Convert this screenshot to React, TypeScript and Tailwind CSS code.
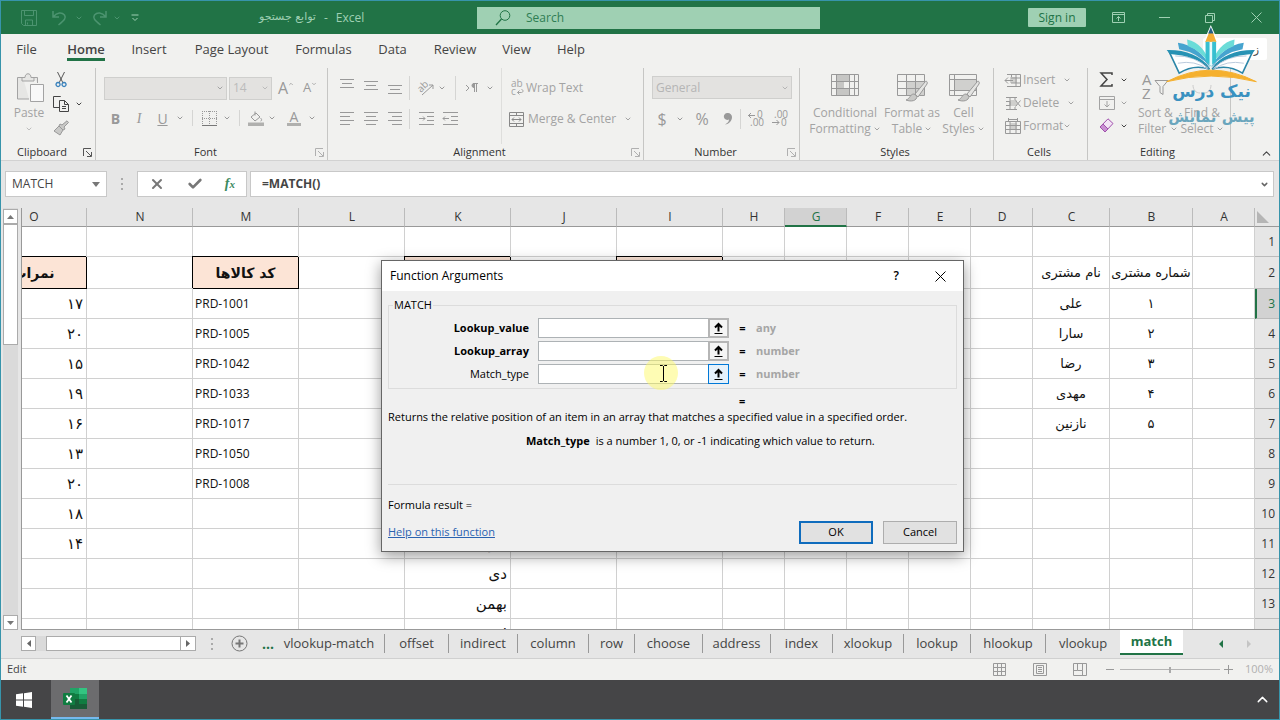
import { useState } from 'react'
import type { ReactNode } from 'react'
import { ChevronDown, ChevronUp, X, Check } from 'lucide-react'

const ribbonTabs = [
  { name: 'File', width: 'w-[51px]' },
  { name: 'Home', width: 'w-[68px]' },
  { name: 'Insert', width: 'w-[58px]' },
  { name: 'Page Layout', width: 'w-[107px]' },
  { name: 'Formulas', width: 'w-[77px]' },
  { name: 'Data', width: 'w-[61px]' },
  { name: 'Review', width: 'w-16' },
  { name: 'View', width: 'w-[59px]' },
  { name: 'Help', width: 'w-[50px]' },
]

const columns = [
  { name: 'O', width: 'w-[106px]' },
  { name: 'N', width: 'w-[106px]' },
  { name: 'M', width: 'w-[106px]' },
  { name: 'L', width: 'w-[106px]' },
  { name: 'K', width: 'w-[106px]' },
  { name: 'J', width: 'w-[106px]' },
  { name: 'I', width: 'w-[106px]' },
  { name: 'H', width: 'w-[62px]' },
  { name: 'G', width: 'w-[62px]' },
  { name: 'F', width: 'w-[62px]' },
  { name: 'E', width: 'w-[62px]' },
  { name: 'D', width: 'w-[62px]' },
  { name: 'C', width: 'w-[77px]' },
  { name: 'B', width: 'w-[83px]' },
  { name: 'A', width: 'w-[62px]' },
]

const cells: Record<string, string> = {
  O2: 'نمرات', O3: '۱۷', O4: '۲۰', O5: '۱۵', O6: '۱۹', O7: '۱۶', O8: '۱۳', O9: '۲۰', O10: '۱۸', O11: '۱۴',
  M2: 'کد کالاها', M3: 'PRD-1001', M4: 'PRD-1005', M5: 'PRD-1042', M6: 'PRD-1033', M7: 'PRD-1017', M8: 'PRD-1050', M9: 'PRD-1008',
  K2: '', K11: 'آذر', K12: 'دی', K13: 'بهمن', K14: 'اسفند',
  I2: '',
  C2: 'نام مشتری', C3: 'علی', C4: 'سارا', C5: 'رضا', C6: 'مهدی', C7: 'نازنین',
  B2: 'شماره مشتری', B3: '۱', B4: '۲', B5: '۳', B6: '۴', B7: '۵',
}

const headerCells = ['O2', 'M2', 'K2', 'I2']

const sheets = [
  { name: 'vlookup-match', width: 'w-[111px]' },
  { name: 'offset', width: 'w-16' },
  { name: 'indirect', width: 'w-[69px]' },
  { name: 'column', width: 'w-[71px]' },
  { name: 'row', width: 'w-[46px]' },
  { name: 'choose', width: 'w-[68px]' },
  { name: 'address', width: 'w-[68px]' },
  { name: 'index', width: 'w-[62px]' },
  { name: 'xlookup', width: 'w-[71px]' },
  { name: 'lookup', width: 'w-[67px]' },
  { name: 'hlookup', width: 'w-[75px]' },
  { name: 'vlookup', width: 'w-[74px]' },
  { name: 'match', width: 'w-[63px]' },
]

const args = [
  { name: 'Lookup_value', type: 'any', required: true },
  { name: 'Lookup_array', type: 'number', required: true },
  { name: 'Match_type', type: 'number', required: false },
]

function Icon({ w = 16, h = 16, className = '', children }: { w?: number; h?: number; className?: string; children: ReactNode }) {
  return (
    <svg width={w} height={h} viewBox={`0 0 ${w} ${h}`} fill="none" stroke="currentColor" className={`shrink-0 overflow-visible ${className}`}>
      {children}
    </svg>
  )
}

function Caret({ className = 'w-[18px]' }: { className?: string }) {
  return (
    <span className={`flex shrink-0 justify-center ${className}`}>
      <ChevronDown size={8} strokeWidth={3} />
    </span>
  )
}

function Tool({ label, className = 'w-6', children }: { label: string; className?: string; children: ReactNode }) {
  return (
    <button aria-label={label} className={`flex h-6 shrink-0 items-center justify-center ${className}`}>
      {children}
    </button>
  )
}

function Line({ className = 'h-5' }: { className?: string }) {
  return <span className={`w-px shrink-0 bg-[#d5d5d3] ${className}`} />
}

function Launcher({ dark }: { dark?: boolean }) {
  return (
    <button aria-label="More options" className={dark ? 'text-[#555]' : 'text-[#b0b0b0]'}>
      <Icon w={9} h={9}>
        <path d="M.5 8V.5H8M3 3l5 5M8.500 4v4.500H4" />
      </Icon>
    </button>
  )
}

function Group({ name, width, launcher, children }: { name: string; width: string; launcher?: 'dark' | 'light'; children: ReactNode }) {
  return (
    <section className={`flex shrink-0 flex-col border-r border-[#c6c6c4] ${width}`}>
      <div className="flex h-[76px]">{children}</div>
      <div className="flex h-4 items-center pr-[3px]">
        <span className="flex-1 text-center text-[11px] text-[#333]">{name}</span>
        {launcher && <Launcher dark={launcher === 'dark'} />}
      </div>
    </section>
  )
}

function Lines({ widths, align }: { widths: number[]; align: 'start' | 'middle' | 'end' }) {
  return (
    <Icon w={14} h={14}>
      {widths.map((w, i) => {
        const x = align === 'start' ? 0 : align === 'end' ? 14 - w : (14 - w) / 2
        return <path key={i} d={`M${x} ${i * 4 + 0.5}h${w}`} />
      })}
    </Icon>
  )
}

function Brush() {
  return (
    <g>
      <path d="M29 9 19 21l3 3 9-13c1-2-1-4-2-2z" fill="#e4e4e2" />
      <path d="M18 21c-4 0-4 5-8 6 5 2 11 1 11-4z" fill="#c8c8c6" />
    </g>
  )
}

function TitleBar() {
  return (
    <header className="flex h-[33px] shrink-0 items-center bg-[#217346] text-[#9fd0b3]">
      <div className="flex w-[476px] shrink-0 items-center">
        <div className="flex flex-1 items-center pl-4 text-[#4c9470]">
          <Tool label="Save">
            <Icon>
              <path d="M.5.5h15v15h-13l-2-2zM3.500.5v5h9v-5M4.500 15v-5h7v5M6.500 12.500v2" />
            </Icon>
          </Tool>
          <Tool label="Undo" className="ml-[6px] w-6">
            <Icon w={15} h={16}>
              <path strokeWidth="1.500" d="M1 1v6h6M1.500 6.500C5 2 10 2 12.500 5c2 3 0 5-6 10" />
            </Icon>
          </Tool>
          <Caret className="w-4" />
          <Tool label="Redo" className="w-6">
            <Icon w={15} h={16}>
              <path strokeWidth="1.500" d="M14 1v6H8M13.500 6.500C10 2 5 2 2.500 5c-2 3 0 5 6 10" />
            </Icon>
          </Tool>
          <Caret className="w-3" />
          <Tool label="Customize quick access" className="w-6 text-[#9fd0b3]">
            <Icon w={8} h={8}>
              <path d="M.5 1h7M1.500 4l2.500 2.500L6.500 4" />
            </Icon>
          </Tool>
        </div>
        <h1 className="flex w-[218px] gap-2 text-[12px]">
          <span dir="rtl" lang="fa" className="font-['DejaVu_Sans',sans-serif] text-[11px]">توابع جستجو</span>
          <span>-</span>
          <span>Excel</span>
        </h1>
      </div>
      <label className="flex h-[22px] w-[343px] shrink-0 items-center bg-[#9fd0b3] pl-[18px] text-[#217346]">
        <Icon w={16} h={16}>
          <circle cx="10" cy="5.500" r="4.800" />
          <path strokeWidth="1.300" d="M6.500 9 1 15" />
        </Icon>
        <input aria-label="Search" placeholder="Search" className="ml-[15px] w-60 bg-transparent text-[12px] outline-none placeholder:text-[#2f7d53]" />
      </label>
      <div className="flex flex-1 items-center justify-end">
        <button className="mr-[9px] h-[19px] w-[58px] rounded-[1px] bg-[#9fd0b3] text-[12px] leading-[19px] text-[#217346]">Sign in</button>
        <Tool label="Ribbon display options" className="w-[46px]">
          <Icon w={13} h={11}>
            <path d="M.5.5h12v10H.5zM.5 2.500h12M6.500 9V4.500M4.500 6.500l2-2 2 2" />
          </Icon>
        </Tool>
        <Tool label="Minimize" className="w-[46px]">
          <Icon w={11} h={2}><path d="M0 .5h11" /></Icon>
        </Tool>
        <Tool label="Restore" className="w-[46px]">
          <Icon w={10} h={10}><path d="M.5 2.500h7v7h-7zM2.500 2.500v-2h7v7h-2" /></Icon>
        </Tool>
        <Tool label="Close" className="w-[46px]">
          <Icon w={11} h={11}><path d="m.5.5 10 10m0-10-10 10" /></Icon>
        </Tool>
      </div>
    </header>
  )
}

function Ribbon() {
  return (
    <div className="flex h-[92px] shrink-0 bg-[#f1f1ef] text-[12px] text-[#a3a3a3]">
      <Group name="Clipboard" width="w-[95px]" launcher="dark">
        <div className="flex w-14 flex-col items-center pt-1">
          <Icon w={28} h={31} className="ml-1">
            <path d="M12 27H.5V5.500H6M17 5.500h3.500V11M5 9V5.500h3c0-5 6-5 6 0h3V9z" fill="#e6e6e4" />
            <path d="M13.500 12.500h13v17h-13z" fill="#f8f8f8" />
          </Icon>
          <button className="mt-[2px] text-[12px] leading-4">Paste</button>
          <ChevronDown size={8} strokeWidth={2} className="mt-1" />
        </div>
        <div className="flex flex-1 flex-col">
          <Tool label="Cut" className="w-2">
            <Icon w={12} h={16}>
              <path stroke="#555" d="M2.500 0 8 11M9.500 0 4 11" />
              <path stroke="#3b83bd" strokeWidth="1.400" d="M3 10.500a2 2 0 1 0 .1 0zM9 10.500a2 2 0 1 0 .1 0z" />
            </Icon>
          </Tool>
          <div className="flex items-center text-[#444]">
            <Tool label="Copy" className="w-2">
              <Icon w={17} h={16}>
                <path d="M6 11.500H.5V.5h7L8 1M6.500 4.500h5l4 4v7h-9zM11.500 4.500v4h4M9 10.500h4M9 12.500h4" />
              </Icon>
            </Tool>
            <Caret className="ml-[6px] w-4" />
          </div>
          <Tool label="Format painter" className="w-2">
            <Icon w={16} h={16}>
              <path fill="#c9c9c7" stroke="#999" d="M9 5 14 .8l1.500 1.700L11 7l1 2-2 1-4-4 1-2zM6 6l4 4-3 5-6-4z" />
            </Icon>
          </Tool>
        </div>
      </Group>

      <Group name="Font" width="w-[232px]" launcher="light">
        <div className="flex flex-col pl-2 pt-2">
          <div className="flex items-center gap-[2px]">
            <button aria-label="Font name" className="flex h-[23px] w-[123px] items-center justify-end border border-[#cfcfcd] bg-[#e3e2e0]"><Caret className="w-3" /></button>
            <button aria-label="Font size" className="flex h-[23px] w-[43px] items-center justify-between border border-[#cfcfcd] bg-[#e3e2e0] pl-[3px] text-[#bbb]">14<Caret className="w-3" /></button>
            <Tool label="Increase font size" className="ml-[2px] w-5 text-[16px] text-[#999]">A<ChevronUp size={6} strokeWidth={3} className="mb-2" /></Tool>
            <Tool label="Decrease font size" className="w-6 text-[13px] text-[#999]">A<ChevronDown size={6} strokeWidth={3} className="mb-2" /></Tool>
          </div>
          <div className="mt-[6px] flex items-center text-[14px] text-[#999]">
            <Tool label="Bold" className="w-[23px] font-bold">B</Tool>
            <Tool label="Italic" className="w-6 font-['Liberation_Serif',serif] italic">I</Tool>
            <Tool label="Underline" className="w-[23px] underline">U</Tool>
            <Caret className="w-3" />
            <Line className="ml-[6px] h-4" />
            <Tool label="Borders" className="ml-1 w-6">
              <Icon w={15} h={15}>
                <path strokeDasharray="1 1" d="M.5 0v14M14.500 0v14M7.500 0v14M0 .5h15M0 7.500h15" />
                <path stroke="#777" d="M0 14.500h15" />
              </Icon>
            </Tool>
            <Caret className="w-3" />
            <Line className="ml-[6px] h-4" />
            <Tool label="Fill color" className="ml-1 w-6">
              <Icon w={16} h={16}>
                <path d="M7 1.500v4M3 7l5-4 4 4-5 4zM12.500 8c2 2 1 3 0 3" />
                <path stroke="none" fill="#b0b0ae" d="M0 12.500h16V16H0z" />
              </Icon>
            </Tool>
            <Caret className="w-2" />
            <Tool label="Font color" className="ml-[6px] w-6">
              <span className="border-b-3 border-[#b0b0ae] px-[3px] leading-[13px]">A</span>
            </Tool>
            <Caret className="w-3" />
          </div>
        </div>
      </Group>

      <Group name="Alignment" width="w-[316px]" launcher="light">
        <div className="flex w-[173px] flex-col pl-[7px] pt-2 text-[#999]">
          <div className="flex items-center">
            <Tool label="Top align" className="w-6 pb-1"><Lines widths={[14, 10, 14]} align="middle" /></Tool>
            <Tool label="Middle align" className="w-6"><Lines widths={[14, 10, 14]} align="middle" /></Tool>
            <Tool label="Bottom align" className="w-6 pt-2"><Lines widths={[14, 10, 14]} align="middle" /></Tool>
            <Line className="ml-[2px] h-6" />
            <Tool label="Orientation" className="ml-1 w-6">
              <Icon w={17} h={16}>
                <path d="M4 15 15 5M11 5h4v4" />
                <text x="0" y="10" fontSize="10" stroke="none" fill="currentColor" transform="rotate(-45 5 8)">ab</text>
              </Icon>
            </Tool>
            <Caret className="w-2" />
            <Line className="ml-[9px] h-6" />
            <Tool label="Text direction" className="ml-1 w-6">
              <Icon w={14} h={12}>
                <path d="m1 3 3 3-3 3M9.500 1v9M11.500 1v9M8 1.500h5" />
                <path fill="currentColor" d="M9 1.500a2 2 0 0 0 0 4z" />
              </Icon>
            </Tool>
            <Caret className="w-3" />
          </div>
          <div className="mt-[7px] flex items-center">
            <Tool label="Align left"><Lines widths={[14, 10, 14, 10]} align="start" /></Tool>
            <Tool label="Center"><Lines widths={[14, 10, 14, 10]} align="middle" /></Tool>
            <Tool label="Align right"><Lines widths={[14, 10, 14, 10]} align="end" /></Tool>
            <Line className="ml-[2px] h-5" />
            <Tool label="Increase indent" className="ml-1 w-6">
              <Icon w={15} h={14}><path d="M0 .5h15M8 4.500h7M8 8.500h7M0 12.500h15M0 6.500h6M4 4.500l2 2-2 2" /></Icon>
            </Tool>
            <Tool label="Decrease indent">
              <Icon w={15} h={14}><path d="M0 .5h15M8 4.500h7M8 8.500h7M0 12.500h15M0 6.500h6M2 4.500l-2 2 2 2" /></Icon>
            </Tool>
          </div>
        </div>
        <div className="flex flex-1 flex-col border-l border-[#dededc] pl-[7px] pt-2">
          <button className="flex h-6 items-center gap-[2px]">
            <Icon w={15} h={16}>
              <text x="2" y="7" fontSize="10" stroke="none" fill="currentColor">ab</text>
              <text x="2" y="15" fontSize="10" stroke="none" fill="currentColor">c</text>
              <path d="M12.500 9.500c2 0 2 3 0 3H8.500M10.500 10.500l-2 2 2 2" />
            </Icon>
            Wrap Text
          </button>
          <button className="mt-[7px] flex h-6 items-center gap-1">
            <Icon w={15} h={15} className="text-[#888]"><path d="M.5.5h14v14H.5zM.5 3.500h14M.5 11.500h14M7.500 0v3M7.500 12v3M3 7.500h9M5 5.500l-2 2 2 2M10 5.500l2 2-2 2" /></Icon>
            Merge &amp; Center
            <Caret className="ml-1 w-2" />
          </button>
        </div>
      </Group>

      <Group name="Number" width="w-[156px]" launcher="light">
        <div className="flex flex-col pl-2 pt-2">
          <button className="flex h-[23px] w-[140px] items-center justify-between border border-[#cfcfcd] bg-[#e3e2e0] pl-[3px] text-[#b5b5b5]">General<Caret className="w-3" /></button>
          <div className="mt-2 flex items-center text-[16px] text-[#999]">
            <Tool label="Currency" className="w-5">$</Tool>
            <Caret className="w-4" />
            <Tool label="Percent" className="w-7">%</Tool>
            <Tool label="Comma">
              <Icon w={9} h={14}><path fill="currentColor" stroke="none" d="M4 1a3.500 3.500 0 1 0 1 6.500C5 10 3 11 1 12.500 5 12 8 9 8 5c0-2-2-4-4-4z" /></Icon>
            </Tool>
            <Line className="h-5" />
            <Tool label="Increase decimal" className="ml-[3px] w-6">
              <Icon w={16} h={16}>
                <path d="M0 4.500h7M3 2 .5 4.500 3 7" />
                <text x="9" y="7" fontSize="10" stroke="none" fill="currentColor">0</text>
                <text x="2" y="15" fontSize="10" stroke="none" fill="currentColor">.00</text>
              </Icon>
            </Tool>
            <Tool label="Decrease decimal">
              <Icon w={16} h={16}>
                <path d="M0 11.500h7M4.500 9 7 11.500 4.500 14" />
                <text x="2" y="7" fontSize="10" stroke="none" fill="currentColor">.00</text>
                <text x="9" y="15" fontSize="10" stroke="none" fill="currentColor">0</text>
              </Icon>
            </Tool>
          </div>
        </div>
      </Group>

      <Group name="Styles" width="w-[194px]">
        <button className="flex w-[90px] flex-col items-center pt-[5px] leading-4">
          <Icon w={30} h={24} className="mb-2 text-[#999]">
            <path stroke="none" fill="#c6c6c4" d="M6 1h13v7H6zM6 8h8v7H6zM6 15h14v8H6z" />
            <path d="M1.500 1.500h27v21h-27zM6.500 1v21M19.500 1v21M24.500 1v21M1 8.500h27M1 15.500h27" />
          </Icon>
          <span>Conditional</span>
          <span className="flex items-center gap-[2px]">Formatting<ChevronDown size={8} strokeWidth={3} /></span>
        </button>
        <button className="flex w-11 flex-col items-center pt-[5px] leading-4">
          <Icon w={32} h={28} className="mb-1 text-[#999]">
            <path stroke="none" fill="#d0d0ce" d="M10 8h18v14H10z" />
            <path d="M1.500 1.500h27v21h-27zM10.500 1v21M19.500 1v21M1 8.500h27M1 15.500h27" />
            <Brush />
          </Icon>
          <span className="whitespace-nowrap">Format as</span>
          <span className="flex items-center gap-[2px]">Table<ChevronDown size={8} strokeWidth={3} /></span>
        </button>
        <button className="flex w-[59px] flex-col items-center pt-[5px] leading-4">
          <Icon w={32} h={28} className="mb-1 text-[#999]">
            <path stroke="none" fill="#d0d0ce" d="M6 6h22v11H6z" />
            <path d="M1.500 1.500h27v21h-27zM6.500 1v21M1 6.500h27M1 17.500h27" />
            <Brush />
          </Icon>
          <span>Cell</span>
          <span className="flex items-center gap-[2px]">Styles<ChevronDown size={8} strokeWidth={3} /></span>
        </button>
      </Group>

      <Group name="Cells" width="w-[94px]">
        <div className="flex flex-col pl-[11px]">
          {['Insert', 'Delete', 'Format'].map(name => (
            <button key={name} className="flex h-[23px] items-center">
              <Icon className="mr-[2px] text-[#999]">
                <path stroke="none" fill="#cfcfcd" d="M5 5h7v6H5z" />
                {name === 'Insert' && <path d="M2 2.500h13.500v12H2M6.500 2v3M11 2v12M6 6h9M6 11h9M0 8.500h8M3 5.500l-3 3 3 3" />}
                {name === 'Delete' && <path d="M1 2.500h11M1 14.500h11M1 6.500h4v4H1M5 2v12M10 2v3M10 12v3M10.500 5.500l5 6M15.500 5.500l-5 6" />}
                {name === 'Format' && <path d="M.5 3.500h15v12H.5zM5 3v12M11 3v12M0 7.500h16M0 11.500h16M3.500 1.500h9M3.500 0v3M12.500 0v3" />}
              </Icon>
              {name}
              <Caret className={name === 'Format' ? 'w-2' : 'ml-2 w-2'} />
            </button>
          ))}
        </div>
      </Group>

      <Group name="Editing" width="w-[143px]">
        <div className="flex w-[50px] flex-col pl-[10px]">
          <button aria-label="AutoSum" className="flex h-[23px] items-center text-[#444]">
            <Icon w={18} h={15}><path strokeWidth="1.500" d="M14 3V1H3l6 6.500L3 14h11v-2" /></Icon>
            <Caret className="w-4" />
          </button>
          <button aria-label="Fill" className="flex h-[23px] items-center">
            <Icon w={18} h={14}><path d="M1.500.5h15v13h-15zM1.500 3.500h15M9 5v6M6.500 8.500 9 11l2.500-2.500" /></Icon>
            <Caret className="w-4" />
          </button>
          <button aria-label="Clear" className="flex h-[23px] items-center text-[#444]">
            <Icon w={18} h={15}>
              <path stroke="#a050ac" fill="#f3e4f5" d="M2 9 10 .8l5 4.700L7 14z" />
              <path stroke="#a050ac" fill="#c98fd2" d="m2 9 3-3 5 5-3 3z" />
            </Icon>
            <Caret className="w-4" />
          </button>
        </div>
        <button className="flex w-[38px] flex-col items-start pt-[5px] leading-4">
          <Icon w={27} h={28} className="mb-1 ml-1 text-[#999]">
            <text x="0" y="12" fontSize="15" stroke="none" fill="currentColor">A</text>
            <text x="0" y="26" fontSize="15" stroke="none" fill="currentColor">Z</text>
            <path d="M13 7.500h13l-5 6v8l-3-2v-6z" />
          </Icon>
          <span className="whitespace-nowrap">Sort &amp;</span>
          <span className="flex items-center gap-1">Filter<ChevronDown size={8} strokeWidth={3} /></span>
        </button>
        <button className="ml-[2px] flex w-12 flex-col items-center pt-[5px] leading-4">
          <Icon w={26} h={28} className="mb-1 text-[#ccc]">
            <path d="M4 12c0 5 3 8 7 8M22 12c0 5-3 8-7 8" />
          </Icon>
          <span className="whitespace-nowrap">Find &amp;</span>
          <span className="flex items-center gap-[2px]">Select<ChevronDown size={8} strokeWidth={3} /></span>
        </button>
      </Group>

      <div className="flex flex-1 items-end justify-end pr-[6px] text-[#444]">
        <button aria-label="Collapse ribbon"><ChevronUp size={13} strokeWidth={2} /></button>
      </div>
    </div>
  )
}

function FormulaBar() {
  const [formula, setFormula] = useState('=MATCH()')
  return (
    <div className="flex h-12 shrink-0 items-start border-t border-[#d2d2d2] bg-[#e6e6e6] pl-1 pr-[5px] pt-[10px] text-[#444]">
      <div className="flex h-[26px] w-[102px] items-center justify-between border border-[#c8c8c8] bg-white pl-[6px] pr-[6px]">
        <input aria-label="Name box" defaultValue="MATCH" className="w-16 bg-transparent text-[12px] outline-none" />
        <Icon w={8} h={5}><path fill="#777" stroke="none" d="M0 0h8L4 5z" /></Icon>
      </div>
      <div className="flex h-[26px] w-[30px] items-center justify-center text-[#aaa]">
        <Icon w={3} h={12}><path strokeWidth="2" strokeDasharray="2 3" d="M1 0v12" /></Icon>
      </div>
      <div className="flex h-[26px] w-[110px] items-center justify-around border border-[#c8c8c8] bg-white">
        <button aria-label="Cancel entry"><X size={16} strokeWidth={3} className="text-[#777]" /></button>
        <button aria-label="Enter"><Check size={16} strokeWidth={4} className="text-[#777]" /></button>
        <button aria-label="Insert function" className="font-['Liberation_Serif',serif] text-[14px] font-bold italic leading-5 text-[#3b8a5f]">f<span className="text-[11px]">x</span></button>
      </div>
      <div className="ml-[3px] flex h-[26px] flex-1 items-center border border-[#c8c8c8] bg-white pl-[11px] pr-1">
        <input aria-label="Formula" value={formula} onChange={e => setFormula(e.target.value)} className="flex-1 bg-transparent text-[12px] font-bold text-[#444] outline-none" />
        <ChevronDown size={9} strokeWidth={4} className="text-[#666]" />
      </div>
    </div>
  )
}

function cellClass(id: string, col: string) {
  if (headerCells.includes(id)) {
    return "border-black bg-[#fce4d6] text-center font-['DejaVu_Sans',sans-serif] text-[14px] font-bold shadow-[-1px_-1px_0_#000]"
  }
  if (col === 'M') return 'border-[#d0d0d0] pl-[2px] text-left text-[12px]'
  if (col === 'B' || col === 'C') return "border-[#d0d0d0] text-center font-['DejaVu_Sans',sans-serif] text-[13px]"
  return "border-[#d0d0d0] pr-[3px] text-right font-['DejaVu_Sans',sans-serif] text-[15px]"
}

function Grid() {
  const rows = Array.from({ length: 14 }, (_, i) => i + 1)
  return (
    <div className="flex min-h-0 flex-1 bg-[#e6e6e6] pl-[2px]">
      <div className="flex w-[15px] shrink-0 flex-col bg-[#dadada] pt-px text-[#777]">
        <button aria-label="Scroll up" className="flex h-[15px] items-center justify-center border border-[#ababab] bg-white">
          <Icon w={7} h={4}><path fill="#777" stroke="none" d="M0 4h7L3.500 0z" /></Icon>
        </button>
        <div className="h-[121px] border border-[#ababab] bg-white" />
        <button aria-label="Scroll down" className="mt-auto flex h-[15px] items-center justify-center border border-[#ababab] bg-white">
          <Icon w={7} h={4}><path fill="#777" stroke="none" d="M0 0h7L3.500 4z" /></Icon>
        </button>
      </div>
      <div className="ml-[3px] flex flex-1 items-start justify-end overflow-hidden border-b border-l border-[#999]">
        <table className="w-[calc(100%+41px)] shrink-0 table-fixed border-separate border-spacing-0 bg-white text-[#111]">
          <thead>
            <tr className="h-[19px] bg-[#e6e6e6] text-[12px] text-[#333]">
              {columns.map(c => (
                <th
                  key={c.name}
                  className={`p-0 pl-px font-normal leading-4 border-r border-r-[#bbb] ${c.width} ${c.name === 'G' ? 'border-b-2 border-b-[#217346] bg-[#d2d2d2] text-[#217346]' : 'border-b border-b-[#999]'}`}
                >
                  {c.name}
                </th>
              ))}
              <th className="w-6 border-b border-[#999] p-0" aria-label="Select all">
                <Icon w={13} h={13} className="ml-[2px]">
                  <path fill="#b5b5b5" stroke="none" d="M0 0v12h12z" />
                </Icon>
              </th>
            </tr>
          </thead>
          <tbody>
            {rows.map(r => (
              <tr key={r} className={r === 2 ? 'h-8' : 'h-[30px]'}>
                {columns.map(c => {
                  const id = c.name + r
                  return (
                    <td key={c.name} className={`overflow-hidden whitespace-nowrap border-b border-r p-0 leading-5 ${cellClass(id, c.name)}`}>
                      {cells[id]}
                    </td>
                  )
                })}
                <th className={`border-b border-b-[#bbb] p-0 pr-1 text-right text-[12px] font-normal leading-5 ${r === 3 ? 'border-l-2 border-l-[#217346] bg-[#d2d2d2] text-[#217346]' : 'bg-[#e6e6e6] text-[#333]'}`}>
                  {r}
                </th>
              </tr>
            ))}
          </tbody>
        </table>
      </div>
    </div>
  )
}

function SheetBar() {
  const [active, setActive] = useState('match')
  return (
    <div className="flex h-[28px] shrink-0 items-start bg-[#e6e6e6] pl-5">
      <div className="flex h-[27px] w-[175px] shrink-0 items-center">
        <button aria-label="Scroll left" className="flex size-[15px] items-center justify-center border border-[#ababab] bg-white">
          <Icon w={4} h={7}><path fill="#666" stroke="none" d="M4 0v7L0 3.500z" /></Icon>
        </button>
        <div className="h-[15px] w-[10px] bg-[#dadada]" />
        <div className="h-[15px] w-[135px] border border-[#ababab] bg-white" />
        <button aria-label="Scroll right" className="flex size-[15px] items-center justify-center border border-l-0 border-[#ababab] bg-white">
          <Icon w={4} h={7}><path fill="#666" stroke="none" d="M0 0v7l4-3.500z" /></Icon>
        </button>
      </div>
      <div className="flex h-[27px] w-8 shrink-0 items-center justify-center text-[#aaa]">
        <Icon w={3} h={12}><path strokeWidth="2" strokeDasharray="2 3" d="M1 0v12" /></Icon>
      </div>
      <button aria-label="New sheet" className="flex h-[27px] w-[22px] shrink-0 items-center justify-center text-[#777]">
        <Icon w={17} h={17}>
          <circle cx="8.500" cy="8.500" r="7.500" />
          <path strokeWidth="2" d="M8.500 4.500v8M4.500 8.500h8" />
        </Icon>
      </button>
      <button aria-label="More sheets" className="flex h-[27px] w-6 shrink-0 items-center justify-end text-[14px] font-bold text-[#217346]">...</button>
      {sheets.map(s => (
        <button
          key={s.name}
          onClick={() => setActive(s.name)}
          className={`flex shrink-0 items-center justify-center whitespace-nowrap text-[13px] ${s.width} ${
            active === s.name
              ? 'h-[25px] border-b-2 border-[#217346] bg-white font-bold text-[#217346]'
              : s.name === 'vlookup'
                ? 'h-[27px] text-[#444]'
                : 'my-[4px] h-[19px] border-r border-[#999] text-[#444]'
          }`}
        >
          {s.name}
        </button>
      ))}
      <div className="flex h-[27px] flex-1 items-center justify-end gap-6 pr-7">
        <Icon w={4} h={8}><path fill="#217346" stroke="none" d="M4 0v8L0 4z" /></Icon>
        <Icon w={4} h={8}><path fill="#c4c4c4" stroke="none" d="M0 0v8l4-4z" /></Icon>
      </div>
    </div>
  )
}

function StatusBar() {
  const [zoom, setZoom] = useState(50)
  return (
    <footer className="flex h-[22px] shrink-0 items-center border-t border-[#d0d0d0] bg-[#f1f1ef] px-[6px] text-[11px] text-[#999]">
      <span className="flex-1 text-[#444]">Edit</span>
      <Tool label="Normal view" className="w-[41px]">
        <Icon w={13} h={13}><path d="M.5.5h12v12H.5zM4.500 0v13M8.500 0v13M0 4.500h13M0 8.500h13" /></Icon>
      </Tool>
      <Tool label="Page layout view" className="w-10">
        <Icon w={14} h={13}><path d="M.5.5h13v12H.5zM3.500 2.500h7v8h-7zM5 4.500h4M5 6.500h4M5 8.500h4" /></Icon>
      </Tool>
      <Tool label="Page break view" className="w-10">
        <Icon w={14} h={13}><path d="M.5.5h13v12H.5zM4.500 0v7.500h5V0M.5 7.500h4M9.500 7.500v5" /></Icon>
      </Tool>
      <button aria-label="Zoom out" className="ml-[6px] flex w-[14px] items-center"><Icon w={8} h={1}><path d="M0 .5h8" /></Icon></button>
      <input
        type="range"
        aria-label="Zoom"
        value={zoom}
        onChange={e => setZoom(Number(e.target.value))}
        className="h-px w-[100px] appearance-none bg-[#b5b5b5] [&::-webkit-slider-thumb]:h-[6px] [&::-webkit-slider-thumb]:w-[2px] [&::-webkit-slider-thumb]:appearance-none [&::-webkit-slider-thumb]:bg-[#aaa]"
      />
      <button aria-label="Zoom in" className="ml-1"><Icon w={9} h={9}><path d="M0 4.500h9M4.500 0v9" /></Icon></button>
      <span className="ml-3 w-[28px] text-right text-[#b0b0b0]">100%</span>
    </footer>
  )
}

function Taskbar() {
  return (
    <nav className="flex h-[39px] shrink-0 items-center bg-[#454547]">
      <button aria-label="Start" className="flex w-[50px] items-center justify-center pr-1">
        <Icon w={16} h={16}>
          <path fill="#fff" stroke="none" d="M0 2.300 7 1.300v6.200H0zM8 1.200 16 0v7.500H8zM0 8.500h7v6.200l-7-1zM8 8.500h8V16l-8-1.200z" />
        </Icon>
      </button>
      <button aria-label="Excel" className="flex h-full w-12 items-center justify-center border-b-2 border-[#76b9ed] bg-[#6c6c6e]">
        <Icon w={25} h={22}>
          <g stroke="none">
            <path fill="#21a366" d="M7 0h9v6H7z" />
            <path fill="#33c481" d="M16 0h8v6h-8z" />
            <path fill="#107c41" d="M7 6h9v5H7z" />
            <path fill="#21a366" d="M16 6h8v5h-8z" />
            <path fill="#185c37" d="M7 11h9v10H7z" />
            <path fill="#107c41" d="M16 11h8v5h-8z" />
            <path fill="#185c37" d="M16 16h8v5h-8z" />
            <rect x="0" y="5" width="12" height="12" rx="1" fill="#107c41" />
          </g>
          <path stroke="#fff" strokeWidth="1.800" d="m3.500 7.500 5 7M8.500 7.500l-5 7" />
        </Icon>
      </button>
      <button aria-label="Show hidden icons" className="ml-auto mr-2 text-white"><ChevronUp size={17} strokeWidth={2} /></button>
    </nav>
  )
}

function FunctionDialog() {
  const [values, setValues] = useState<Record<string, string>>({})
  return (
    <div role="dialog" aria-label="Function Arguments" className="absolute left-[380px] top-[259px] w-[583px] border border-[#666] bg-[#f0f0f0] text-[11px] text-black shadow-[0_4px_14px_rgba(0,0,0,0.4)]">
      <div className="flex h-[30px] items-center bg-white pl-2 pr-[17px]">
        <h2 className="flex-1 text-[12px]">Function Arguments</h2>
        <button aria-label="Help" className="mr-9 text-[12px] font-semibold">?</button>
        <button aria-label="Close"><Icon w={11} h={11}><path d="m.5.5 10 10m0-10-10 10" /></Icon></button>
      </div>
      <div className="px-[6px]">
        <fieldset className="mt-[6px] h-[92px] border border-[#dcdcdc]">
          <legend className="ml-1 px-px leading-4">MATCH</legend>
          <div className="flex flex-col gap-[3px] pt-[5px]">
            {args.map(a => (
              <div key={a.name} className="flex h-5 items-center">
                <label htmlFor={a.name} className={`w-[140px] text-right ${a.required ? 'font-bold' : ''}`}>{a.name}</label>
                <input
                  id={a.name}
                  value={values[a.name] || ''}
                  onChange={e => setValues(v => ({ ...v, [a.name]: e.target.value }))}
                  className="ml-[9px] h-5 w-[170px] border border-r-0 border-[#adb2b5] bg-white px-1 outline-none"
                />
                <button
                  aria-label={`Pick ${a.name}`}
                  className={`flex h-5 w-[21px] items-center justify-center border ${a.required ? 'border-2 border-[#b5b5b5] bg-[#f4f4f4]' : 'border-[#0078d7] bg-[#e5f1fb]'}`}
                >
                  <Icon w={9} h={11}><path strokeWidth="2" d="M4.500 1v7.500M1 4.500l3.500-3.500L8 4.500" /><path d="M.5 10.500h8" /></Icon>
                </button>
                <span className="w-[27px] text-center font-bold">=</span>
                <span className="font-bold text-[#a5a5a5]">{a.type}</span>
              </div>
            ))}
          </div>
        </fieldset>
        <p className="mt-1 pl-[351px] font-bold leading-4">=</p>
        <p className="leading-4">Returns the relative position of an item in an array that matches a specified value in a specified order.</p>
        <p className="mt-2 flex h-[51px] gap-[6px] pl-[138px] leading-4"><b>Match_type</b><span>is a number 1, 0, or -1 indicating which value to return.</span></p>
        <div className="border-t border-[#dcdcdc] pt-3">
          <p className="leading-4">Formula result =</p>
        </div>
        <div className="mb-[7px] mt-2 flex items-center gap-[10px]">
          <a href="#help" className="mr-auto text-[#2a62b0] underline">Help on this function</a>
          <button className="h-[23px] w-[74px] border-2 border-[#0f6cbd] bg-[#e1e1e1]">OK</button>
          <button className="h-[23px] w-[74px] border border-[#adadad] bg-[#e1e1e1]">Cancel</button>
        </div>
      </div>
    </div>
  )
}

function Watermark() {
  return (
    <div className="pointer-events-none absolute right-[21px] top-[22px] flex flex-col items-center font-['DejaVu_Sans',sans-serif] font-bold">
      <svg width="93" height="60" viewBox="0 0 280 182">
        <path d="M138 6 160 56v64h-44V56z" fill="#fff" />
        {['', 'translate(276 0) scale(-1 1)'].map(t => (
          <g key={t} transform={t}>
            <path d="M12 88Q86 88 134 140Q86 124 42 152Z" fill="#fff" stroke="#2b86a8" strokeWidth="5" />
            <path d="M30 100Q90 98 130 138M38 122Q90 112 128 140" fill="none" stroke="#b9c9dc" strokeWidth="3" />
            <path d="M4 82Q90 80 136 136Q92 100 14 94Z" fill="#2792b4" />
            <path d="M38 60Q104 70 137 134Q98 90 42 80Z" fill="#46a4cf" />
            <path d="M66 50Q118 62 137 128Q108 84 68 70Z" fill="#6bdcd8" />
          </g>
        ))}
        <path d="M122 56h32v60l-16 14-16-14z" fill="#38bfd0" />
        <path d="M134 56h8v72h-8z" fill="#e8fbfc" />
        <path d="m132 30h13l10 28q-8-4-17 0q-8-4-17 0z" fill="#f4ad35" />
        <path d="m138 12 8 20h-16z" fill="#235f86" />
        <path d="M4 178Q138 108 276 178Q138 144 4 178Z" fill="#f5b02e" stroke="#f5b02e" strokeWidth="3" />
      </svg>
      <span dir="rtl" lang="fa" className="text-[17px] leading-4 text-[#3a91c0]">نیک درس</span>
      <span dir="rtl" lang="fa" className="mt-2 text-[15px] leading-5 text-[#6ba6bd]">پیش نمایش</span>
    </div>
  )
}

export default function App() {
  const [tab, setTab] = useState('Home')
  return (
    <div className="relative flex h-screen flex-col overflow-hidden border border-[#3794ab] font-['Open_Sans','DejaVu_Sans',sans-serif]">
      <TitleBar />
      <div className="flex h-[34px] shrink-0 items-start bg-[#f1f1ef] text-[#444]">
        {ribbonTabs.map(t => (
          <button key={t.name} onClick={() => setTab(t.name)} className={`flex h-[27px] justify-center text-[13px] leading-[30px] ${t.width}`}>
            <span className={tab === t.name ? 'border-b-3 border-[#217346] font-semibold' : ''}>{t.name}</span>
          </button>
        ))}
        <button dir="rtl" lang="fa" className="ml-auto mr-3 mt-1 h-[22px] w-16 rounded-[2px] bg-white pr-2 text-right text-[11px]">ز</button>
      </div>
      <Ribbon />
      <FormulaBar />
      <Grid />
      <SheetBar />
      <StatusBar />
      <Taskbar />
      <FunctionDialog />
      <div className="pointer-events-none absolute left-[643px] top-[355px] flex size-[34px] items-center justify-center rounded-full bg-[#fdfa6a]/50 pl-1">
        <Icon w={9} h={17} className="text-black"><path d="M1 .5h2.500l1 1 1-1H8M1 16.500h2.500l1-1 1 1H8M4.500 1v15" /></Icon>
      </div>
      <Watermark />
    </div>
  )
}
